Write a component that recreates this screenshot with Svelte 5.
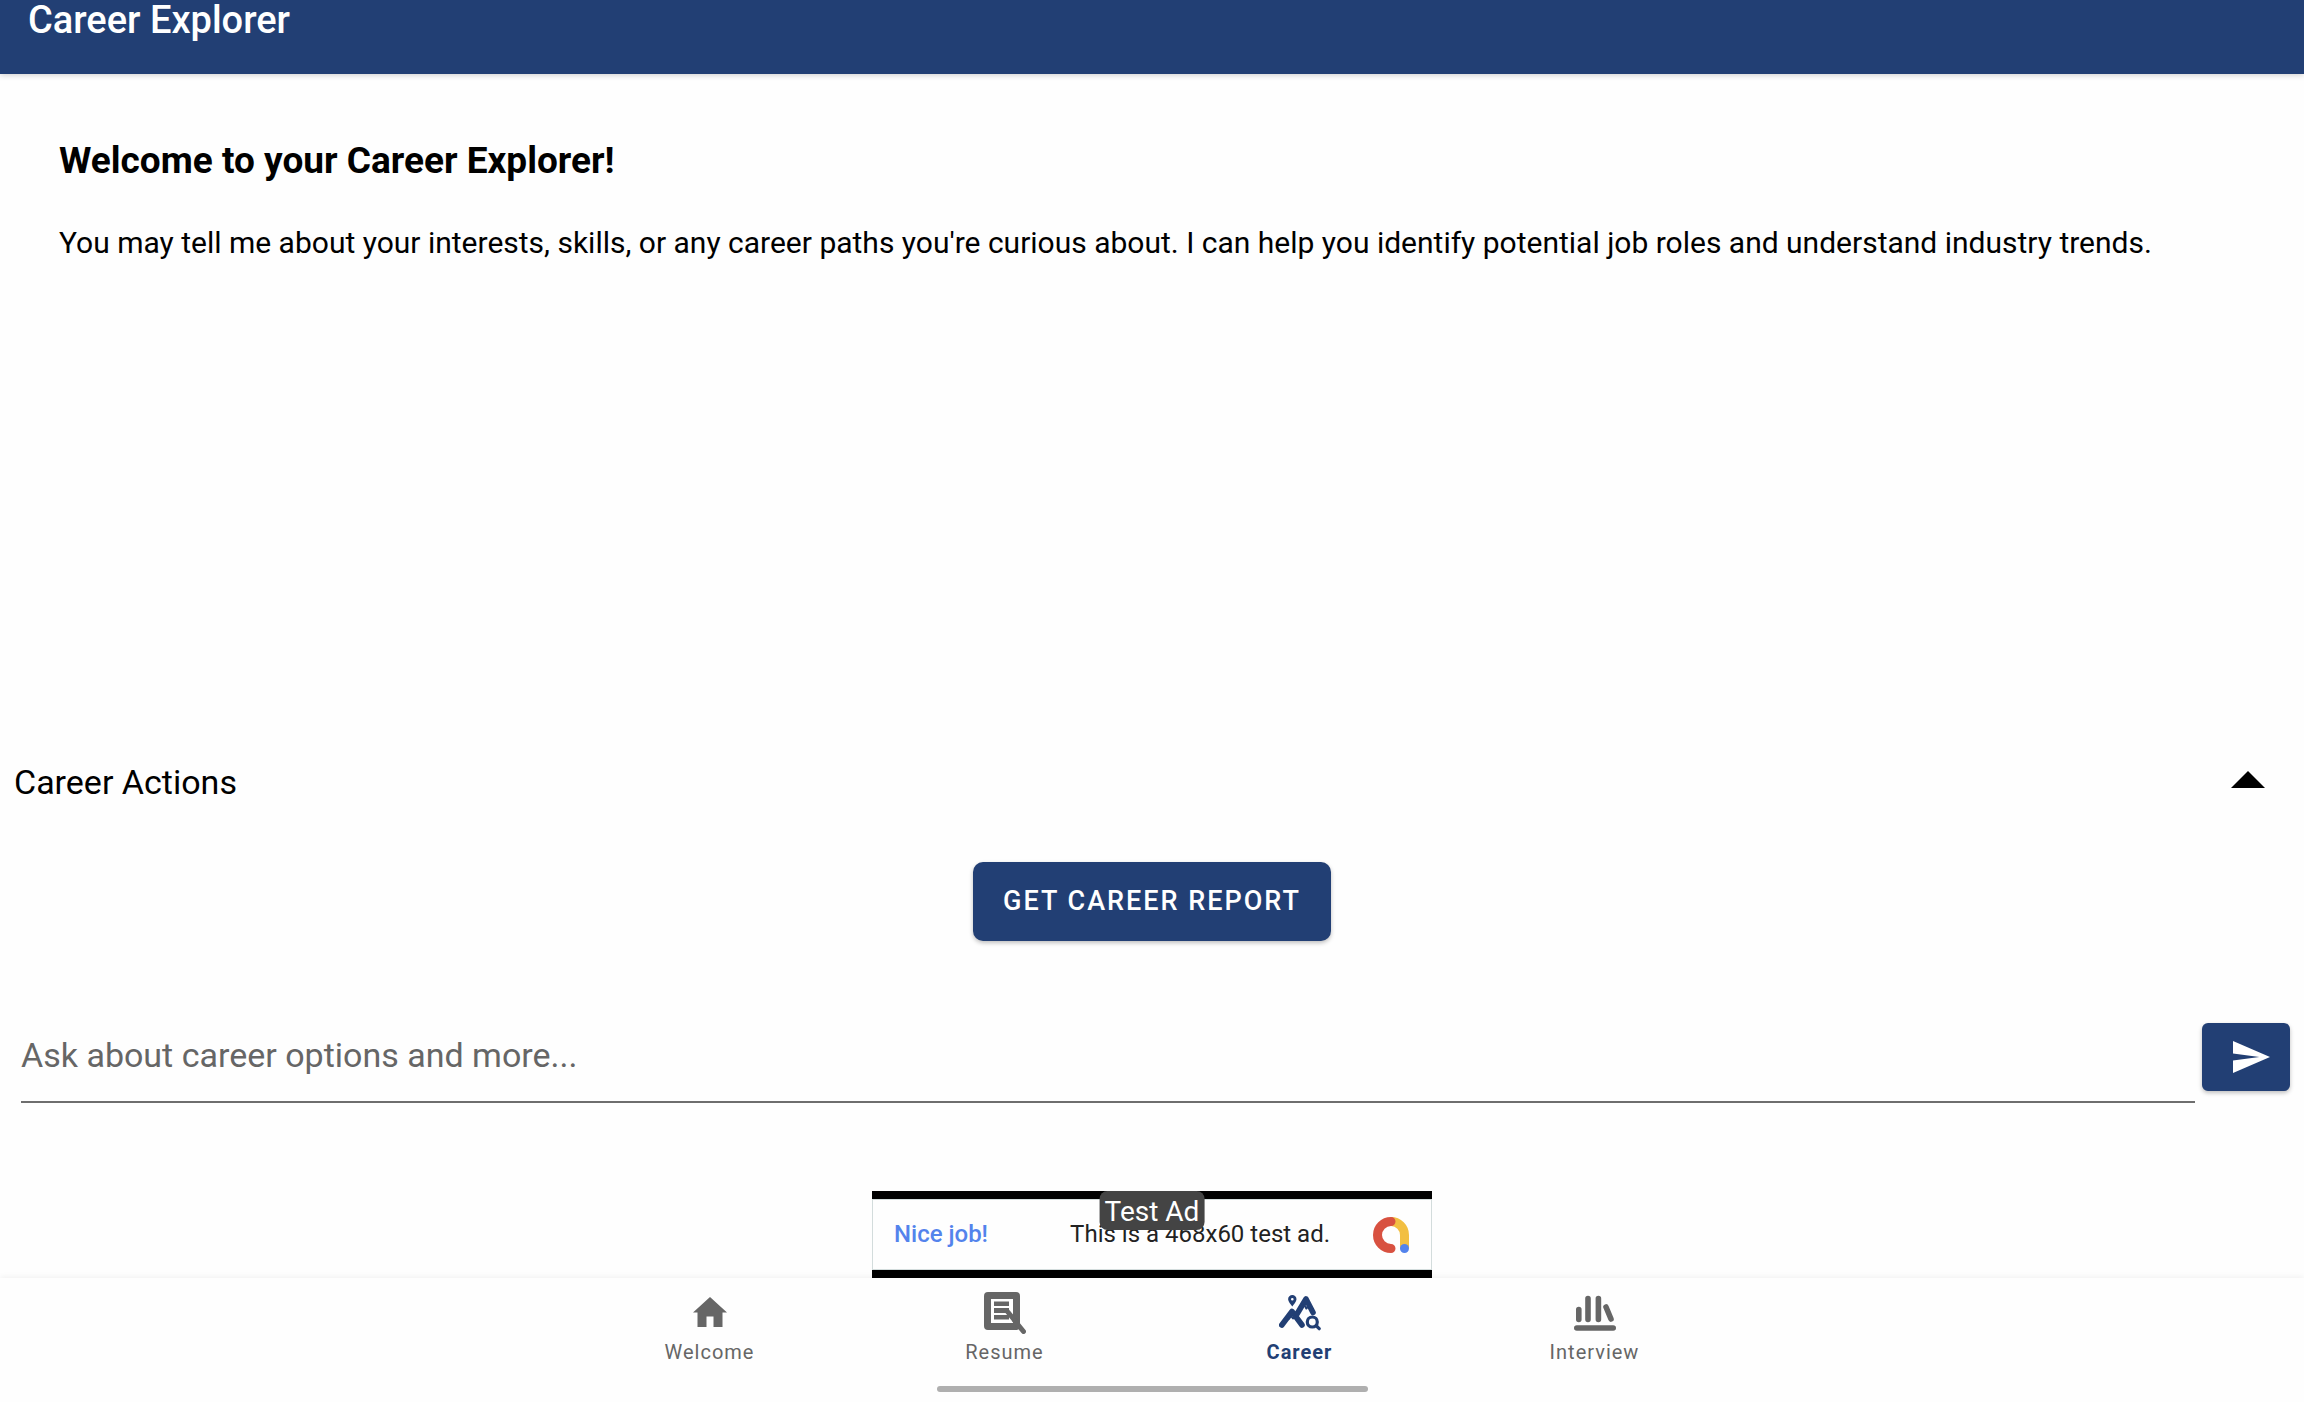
<script lang="ts">
  type TabId = 'welcome' | 'resume' | 'career' | 'interview';

  const tabs: { id: TabId; label: string }[] = [
    { id: 'welcome', label: 'Welcome' },
    { id: 'resume', label: 'Resume' },
    { id: 'career', label: 'Career' },
    { id: 'interview', label: 'Interview' }
  ];

  let activeTab: TabId = $state('career');
  let actionsOpen = $state(true);
  let question = $state('');

  function sendQuestion(e: SubmitEvent) {
    e.preventDefault();
    question = '';
  }
</script>

<div class="app">
  <header class="app-bar">
    <h1>Career Explorer</h1>
  </header>

  <main class="conversation">
    <h2>Welcome to your Career Explorer!</h2>
    <p>
      You may tell me about your interests, skills, or any career paths you're curious about. I can
      help you identify potential job roles and understand industry trends.
    </p>
  </main>

  <section class="actions">
    <button
      class="actions-toggle"
      type="button"
      aria-expanded={actionsOpen}
      onclick={() => (actionsOpen = !actionsOpen)}
    >
      <span>Career Actions</span>
      <svg class="caret" class:closed={!actionsOpen} viewBox="0 0 34 22" aria-hidden="true">
        <path d="M0 17 17 0l17 17z" />
      </svg>
    </button>
    {#if actionsOpen}
      <button class="report-btn" type="button">GET CAREER REPORT</button>
    {/if}
  </section>

  <form class="composer" onsubmit={sendQuestion}>
    <input
      type="text"
      aria-label="Ask about career options and more"
      placeholder="Ask about career options and more..."
      bind:value={question}
    />
    <button class="send-btn" type="submit" aria-label="Send">
      <svg viewBox="0 0 37 32" aria-hidden="true">
        <path d="M0 32 37 16 0 0v12.4L26.4 16 0 19.6z" />
      </svg>
    </button>
  </form>

  <aside class="ad">
    <span class="ad-tag">Test Ad</span>
    <a class="ad-link" href="#ad">
      <strong>Nice job!</strong>
      <span class="ad-copy">This is a 468x60 test ad.</span>
      <svg class="ad-logo" viewBox="0 0 36 36" aria-hidden="true">
        <path d="M18 4.5a13.5 13.5 0 0 1 13.5 13.5v13" stroke="#f2bf42" />
        <path d="M18 4.5a13.5 13.5 0 0 0 0 27" stroke="#d85140" stroke-linecap="round" />
        <circle cx="31.5" cy="31.5" r="4.5" fill="#5383ec" />
      </svg>
    </a>
  </aside>

  <nav class="bottom-nav">
    <div class="tabs">
      {#each tabs as tab}
        <button
          class="tab"
          class:active={activeTab === tab.id}
          type="button"
          aria-current={activeTab === tab.id ? 'page' : undefined}
          onclick={() => (activeTab = tab.id)}
        >
          <svg viewBox="0 0 42 42" aria-hidden="true">
            {#if tab.id === 'welcome'}
              <path fill="currentColor" d="M21 5 38 20.5h-4.500V35h-9V24.500h-7V35h-9V20.500H4z" />
            {:else if tab.id === 'resume'}
              <path
                fill="currentColor"
                fill-rule="evenodd"
                d="M4 0h28a4 4 0 0 1 4 4v30a4 4 0 0 1-4 4H4a4 4 0 0 1-4-4V4a4 4 0 0 1 4-4zM7 7v24h22V7z"
              />
              <path fill="currentColor" d="M10 9.500h15v4.500H10zM10 16h15v5H10zM10 23h15v4.500H10z" />
              <path stroke="currentColor" stroke-width="5" d="m23 19 9 11" />
              <path stroke="currentColor" stroke-width="5" stroke-linecap="round" d="m31 29 8.500 10.500" />
            {:else if tab.id === 'career'}
              <path
                fill="currentColor"
                fill-rule="evenodd"
                d="M13.300 3a4.200 4.200 0 0 1 4.200 4.200c0 2.500-2.700 4.800-4.200 7.200-1.500-2.400-4.200-4.700-4.200-7.200A4.200 4.200 0 0 1 13.300 3zm0 3a1.300 1.300 0 1 0 0 2.600 1.300 1.300 0 0 0 0-2.600z"
              />
              <g fill="none" stroke="currentColor" stroke-linejoin="round" stroke-linecap="round">
                <path stroke-width="5.600" d="m2.800 33 10.200-13.500L23 33M18 22 27 7l7 13.500" />
                <path stroke-width="2" d="m9.500 27 2.500-3 2 2.500 2-2 1.500 2.500M24 13l2 1 1.300 2.500 1.700-2 1.500-1.500" />
                <circle stroke-width="3.200" cx="33.300" cy="30" r="5" />
                <path stroke-width="3.200" d="m37.500 34 2.700 2.700" />
              </g>
            {:else}
              <g fill="none" stroke="currentColor" stroke-width="5.600" stroke-linecap="round">
                <path d="M4.800 17.500v10M14 6.500v21M24.400 6.500v21M32 15l5 12" />
                <path d="M2.800 36h36.400" />
              </g>
            {/if}
          </svg>
          <span>{tab.label}</span>
        </button>
      {/each}
    </div>
    <div class="home-indicator"></div>
  </nav>
</div>

<style>
  :global(body) {
    margin: 0;
    background: #fefefe;
  }

  .app {
    --primary: #223f74;
    --muted: #666666;
    display: flex;
    flex-direction: column;
    min-height: 100vh;
    font-family: Roboto, 'Noto Sans', sans-serif;
    color: #000;
  }

  button,
  input {
    font: inherit;
    color: inherit;
    border: 0;
    padding: 0;
    background: none;
  }

  button {
    cursor: pointer;
  }

  .app-bar {
    padding: 0 28px 34px;
    background: var(--primary);
    box-shadow: 0 1px 6px rgba(0, 0, 0, 0.2);
    color: #fff;
  }

  .app-bar h1 {
    margin: 0;
    font-size: 38px;
    font-weight: 500;
    line-height: 40px;
  }

  .conversation {
    flex: 1;
    padding: 65px 59px;
  }

  .conversation h2 {
    margin: 0;
    font-size: 37px;
    font-weight: 700;
    line-height: 44px;
  }

  .conversation p {
    margin: 40px 0 0;
    font-size: 30px;
    line-height: 40px;
  }

  .actions {
    display: flex;
    flex-direction: column;
    align-items: center;
  }

  .actions-toggle {
    display: flex;
    align-items: center;
    justify-content: space-between;
    align-self: stretch;
    padding: 0 39px 0 14px;
    font-size: 34px;
    line-height: 44px;
  }

  .caret {
    width: 34px;
    height: 22px;
  }

  .caret.closed {
    transform: rotate(180deg);
  }

  .report-btn {
    margin-top: 58px;
    padding: 0 30px;
    border-radius: 10px;
    background: var(--primary);
    box-shadow: 0 2px 4px rgba(0, 0, 0, 0.25);
    color: #fff;
    font-size: 27px;
    font-weight: 500;
    line-height: 79px;
    letter-spacing: 2px;
  }

  .composer {
    display: flex;
    align-items: center;
    gap: 7px;
    margin: 70px 14px 88px 21px;
  }

  .composer input {
    flex: 1;
    min-width: 0;
    height: 88px;
    padding-bottom: 2px;
    border-bottom: 2px solid #6e6e6e;
    outline: none;
    font-size: 34px;
  }

  .composer input::placeholder {
    color: var(--muted);
    opacity: 1;
  }

  .send-btn {
    display: flex;
    align-items: center;
    justify-content: flex-end;
    width: 88px;
    height: 68px;
    padding-right: 20px;
    border-radius: 6px;
    background: var(--primary);
    box-shadow: 0 2px 4px rgba(0, 0, 0, 0.25);
  }

  .send-btn svg {
    width: 37px;
    height: 32px;
    fill: #fff;
  }

  .ad {
    position: relative;
    align-self: center;
    width: 560px;
    padding: 8px 0;
    background: #000;
  }

  .ad-link {
    display: flex;
    align-items: center;
    padding: 0 22px 0 21px;
    border: 1px solid #d3dcdc;
    background: #fefefe;
    color: #222;
    font-size: 24px;
    line-height: 69px;
    text-decoration: none;
  }

  .ad-link strong {
    color: #5383ec;
    font-weight: 500;
  }

  .ad-copy {
    margin-left: auto;
  }

  .ad-logo {
    width: 36px;
    height: 36px;
    margin-left: 43px;
    fill: none;
    stroke-width: 9;
  }

  /* Label sits over the top edge of the banner */
  .ad-tag {
    position: absolute;
    top: 0;
    left: 50%;
    transform: translateX(-50%);
    padding: 2px 5px 0;
    border-radius: 8px;
    background: #444;
    color: #fff;
    font-size: 28px;
    line-height: 37px;
    white-space: nowrap;
  }

  .bottom-nav {
    display: flex;
    flex-direction: column;
    align-items: center;
    box-shadow: 0 -1px 6px rgba(0, 0, 0, 0.06);
  }

  .tabs {
    display: flex;
    justify-content: center;
    width: 100%;
  }

  .tab {
    display: flex;
    flex-direction: column;
    align-items: center;
    flex: 0 1 295px;
    padding-top: 14px;
    color: var(--muted);
    font-size: 20px;
    line-height: 28px;
    letter-spacing: 1px;
  }

  .tab svg {
    width: 42px;
    height: 42px;
    margin-bottom: 4px;
  }

  .tab.active {
    color: var(--primary);
    font-weight: 700;
  }

  .home-indicator {
    width: 431px;
    height: 6px;
    margin: 20px 0 10px;
    border-radius: 3px;
    background: #afafaf;
  }
</style>
